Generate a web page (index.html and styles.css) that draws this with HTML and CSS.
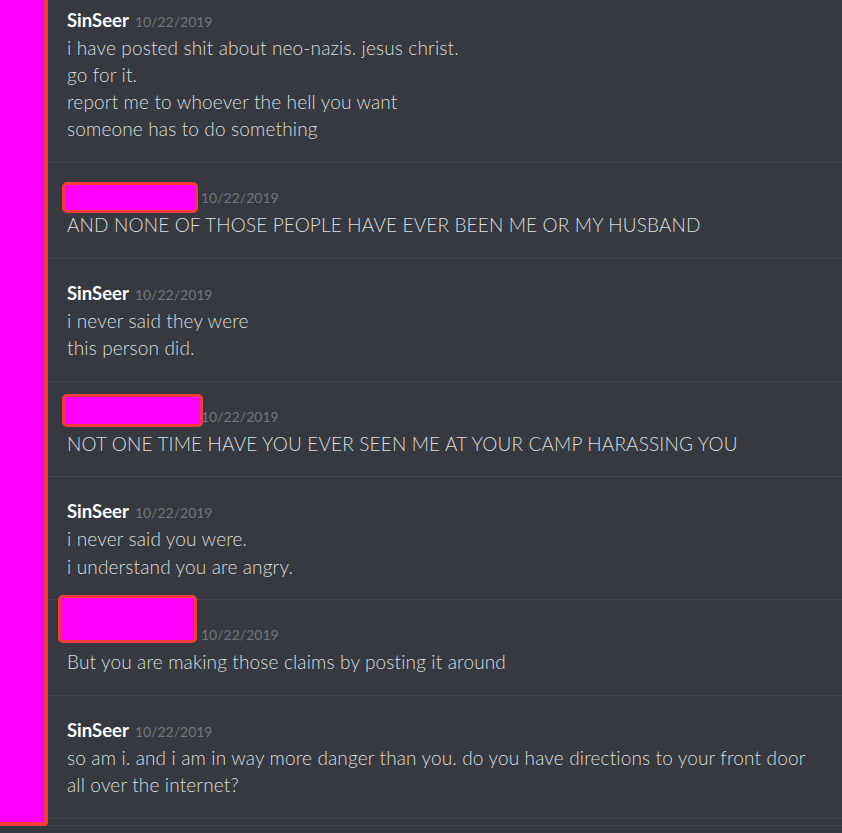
FILE: index.html
```html
<!DOCTYPE html>
<html lang="en">
<head>
    <meta charset="UTF-8">
    <meta name="viewport" content="width=device-width, initial-scale=1.0">
    <title>Chat log</title>
    <link rel="stylesheet" href="styles.css">
</head>
<body>
    <div class="page">
        <div class="side-redaction"></div>
        <div class="messages">
            <div class="message first">
                <div class="header"><span class="author">SinSeer</span><span class="time">10/22/2019</span></div>
                <div class="line">i have posted shit about neo-nazis. jesus christ.</div>
                <div class="line">go for it.</div>
                <div class="line">report me to whoever the hell you want</div>
                <div class="line">someone has to do something</div>
            </div>
            <div class="message">
                <div class="header"><span class="author hidden"><span class="redaction r1"></span></span><span class="time">10/22/2019</span></div>
                <div class="line">AND NONE OF THOSE PEOPLE HAVE EVER BEEN ME OR MY HUSBAND</div>
            </div>
            <div class="message">
                <div class="header"><span class="author">SinSeer</span><span class="time">10/22/2019</span></div>
                <div class="line">i never said they were</div>
                <div class="line">this person did.</div>
            </div>
            <div class="message">
                <div class="header"><span class="author hidden"><span class="redaction r2"></span></span><span class="time">10/22/2019</span></div>
                <div class="line">NOT ONE TIME HAVE YOU EVER SEEN ME AT YOUR CAMP HARASSING YOU</div>
            </div>
            <div class="message">
                <div class="header"><span class="author">SinSeer</span><span class="time">10/22/2019</span></div>
                <div class="line">i never said you were.</div>
                <div class="line">i understand you are angry.</div>
            </div>
            <div class="message">
                <div class="header"><span class="author hidden"><span class="redaction r3"></span></span><span class="time">10/22/2019</span></div>
                <div class="line">But you are making those claims by posting it around</div>
            </div>
            <div class="message">
                <div class="header"><span class="author">SinSeer</span><span class="time">10/22/2019</span></div>
                <div class="line">so am i. and i am in way more danger than you. do you have directions to your front door</div>
                <div class="line">all over the internet?</div>
            </div>
            <div class="message-stub"></div>
        </div>
    </div>
</body>
</html>
```

FILE: styles.css
```css
body {
    margin: 0;
    background-color: #36393f;
    font-family: Lato, "Open Sans", sans-serif;
    color: #dcddde;
}
.page {
    display: flex;
    align-items: flex-start;
    height: 833px;
    overflow: hidden;
}
.side-redaction {
    flex: none;
    width: 44px;
    height: 822px;
    background: #ff00ff;
    border-right: 4px solid #f23c3c;
    border-bottom: 4px solid #f23c3c;
    border-bottom-right-radius: 4px;
}
.messages {
    flex: 1;
    min-width: 0;
}
.message {
    padding: 20px 0 19px 19px;
    border-bottom: 1px solid #42454b;
}
.message.first {
    padding-top: 6px;
    padding-bottom: 20px;
}
.message.first .line {
    line-height: 27px;
}
.message-stub {
    height: 6px;
    border-bottom: 1px solid #42454b;
}
.header {
    height: 28px;
    line-height: 28px;
    white-space: nowrap;
}
.author {
    font-size: 18.5px;
    font-weight: bold;
    color: #ffffff;
    margin-right: 6px;
}
.author.hidden {
    display: inline-block;
    position: relative;
    width: 128px;
    height: 28px;
    vertical-align: top;
}
.redaction {
    position: absolute;
    left: -5px;
    background: #ff00ff;
    border: 3px solid #f23c3c;
    border-radius: 5px;
}
.r1 {
    top: -1px;
    width: 130px;
    height: 25px;
}
.r2 {
    top: -8px;
    width: 135px;
    height: 27px;
}
.r3 {
    left: -9px;
    top: -25px;
    width: 133px;
    height: 42px;
}
.time {
    font-size: 14px;
    color: #72767d;
}
.line {
    font-size: 19px;
    font-weight: 300;
    letter-spacing: 0.15px;
    line-height: 27.5px;
    white-space: nowrap;
}
```
